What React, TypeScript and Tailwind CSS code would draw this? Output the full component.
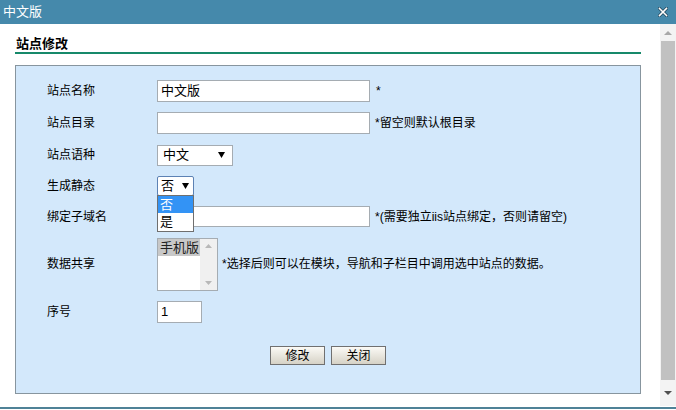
import React from 'react';

const font = "font-['Liberation_Sans','Noto_Sans_CJK_SC',sans-serif]";

function Row({ label, h, children }: { label: string; h: string; children: React.ReactNode }) {
  return (
    <div className={`flex items-center ${h}`}>
      <div className="w-[110px] shrink-0 text-[12px] leading-[14px] text-black">{label}</div>
      <div className="relative flex items-center">{children}</div>
    </div>
  );
}

function Caret() {
  return (
    <svg width="7" height="6" viewBox="0 0 7 6">
      <path d="M0 0 L7 0 L3.5 6 Z" fill="#000" />
    </svg>
  );
}

export default function App() {
  return (
    <div className={`w-[676px] h-[410px] overflow-hidden bg-white flex flex-col ${font}`}>
      {/* title bar */}
      <div className="h-[24px] shrink-0 bg-[#4589ab] flex items-center justify-between pl-[3px] pr-[8px]">
        <span className="text-white text-[13px] leading-[16px]">中文版</span>
        <svg width="10" height="10" viewBox="0 0 10 10">
          <path d="M1.5 1.5 L8.5 8.5 M8.5 1.5 L1.5 8.5" stroke="#1d3f52" strokeWidth="3" strokeLinecap="square" />
          <path d="M1.5 1.5 L8.5 8.5 M8.5 1.5 L1.5 8.5" stroke="#ffffff" strokeWidth="1.6" strokeLinecap="square" />
        </svg>
      </div>

      <div className="h-[382px] shrink-0 flex">
        {/* main */}
        <div className="flex-1 pl-[15px] pr-[19px]">
          <div className="pt-[11px] pl-[1px] text-[13px] leading-[17px] font-bold text-black">站点修改</div>
          <div className="h-[2px] bg-[#16896a]" />
          <div className="mt-[11px] h-[329px] border border-[#87959e] bg-[#d3e8fb] pl-[31px] pt-[9px]">
            <Row label="站点名称" h="h-[32px]">
              <div className="w-[213px] h-[22px] border border-[#a5acb2] bg-white pl-[3px] text-[13px] leading-[20px] text-black">中文版</div>
              <span className="ml-[6px] text-[12px] text-black">*</span>
            </Row>
            <Row label="站点目录" h="h-[32px]">
              <div className="w-[213px] h-[22px] border border-[#a5acb2] bg-white" />
              <span className="ml-[5px] text-[12px] leading-[14px] text-black">*留空则默认根目录</span>
            </Row>
            <Row label="站点语种" h="h-[32px]">
              <div className="w-[76px] h-[21px] border border-[#a5acb2] bg-white flex items-center justify-between pl-[5px] pr-[7px] text-[13px] leading-[16px] text-black">
                <span>中文</span>
                <Caret />
              </div>
            </Row>
            <Row label="生成静态" h="h-[30px]">
              <div className="w-[37px] h-[20px] border border-[#5d82b4] rounded-[2px] bg-white flex items-center justify-between pl-[3px] pr-[4px] text-[13px] leading-[16px] text-black">
                <span>否</span>
                <Caret />
              </div>
              <div className="absolute left-0 top-[19px] z-10 w-[37px] border border-[#6f6f6f] bg-white text-[13px] leading-[17px]">
                <div className="h-[17px] bg-[#3393f5] text-white pl-[2px]">否</div>
                <div className="h-[18px] text-black pl-[2px]">是</div>
              </div>
            </Row>
            <Row label="绑定子域名" h="h-[31px]">
              <div className="w-[213px] h-[21px] border border-[#a5acb2] bg-white" />
              <span className="ml-[5px] text-[12px] leading-[14px] text-black">*(需要独立iis站点绑定，否则请留空)</span>
            </Row>
            <Row label="数据共享" h="h-[64px]">
              <div className="w-[61px] h-[53px] border border-[#a5acb2] bg-white flex">
                <div className="flex-1">
                  <div className="h-[17px] bg-[#c8c8c8] text-[13px] leading-[17px] text-[#222] pl-[2px]">手机版</div>
                </div>
                <div className="w-[17px] bg-[#f0f0f0] flex flex-col items-center justify-between py-[5px]">
                  <svg width="7" height="4" viewBox="0 0 7 4"><path d="M0 4 L3.5 0 L7 4 Z" fill="#b8b8b8" /></svg>
                  <svg width="7" height="4" viewBox="0 0 7 4"><path d="M0 0 L3.5 4 L7 0 Z" fill="#b8b8b8" /></svg>
                </div>
              </div>
              <span className="ml-[4px] text-[12px] leading-[14px] text-black">*选择后则可以在模块，导航和子栏目中调用选中站点的数据。</span>
            </Row>
            <Row label="序号" h="h-[32px]">
              <div className="w-[45px] h-[22px] border border-[#a5acb2] bg-white pl-[3px] text-[13px] leading-[20px] text-black">1</div>
            </Row>
            <div className="mt-[18px] -ml-[31px] flex justify-center gap-[6px]">
              <button className="w-[55px] h-[19px] border border-[#707070] bg-gradient-to-b from-[#fbfaf6] to-[#d6d2c6] text-[12px] leading-[16px] text-black">修改</button>
              <button className="w-[55px] h-[19px] border border-[#707070] bg-gradient-to-b from-[#fbfaf6] to-[#d6d2c6] text-[12px] leading-[16px] text-black">关闭</button>
            </div>
          </div>
        </div>

        {/* page scrollbar */}
        <div className="w-[16px] shrink-0 bg-[#f3f3f3] flex flex-col items-center">
          <div className="h-[17px] flex items-center justify-center">
            <svg width="8" height="5" viewBox="0 0 8 5"><path d="M0 5 L4 1 L8 5 Z" fill="#a8a8a8" /></svg>
          </div>
          <div className="w-[14px] h-[339px] bg-[#c1c1c1]" />
          <div className="flex-1 flex items-center justify-center">
            <svg width="8" height="5" viewBox="0 0 8 5"><path d="M0 0 L4 4 L8 0 Z" fill="#505050" /></svg>
          </div>
        </div>
      </div>

      <div className="mt-[1px] h-[2px] bg-[#4f8297]" />
    </div>
  );
}
